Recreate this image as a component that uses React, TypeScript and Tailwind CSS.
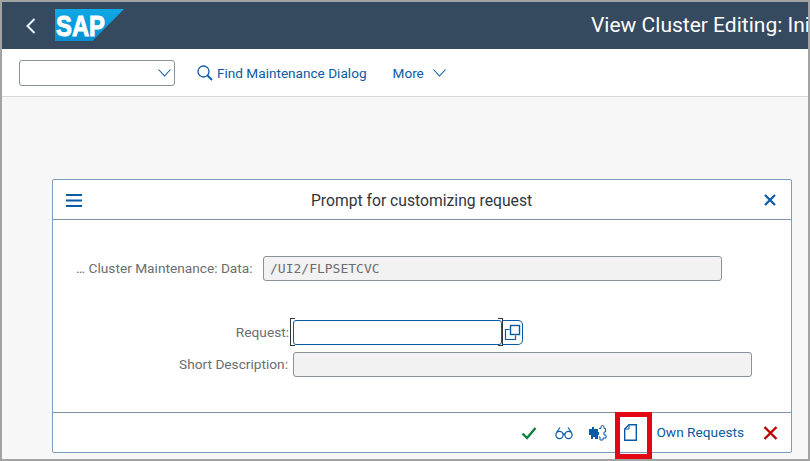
const font = "font-['Roboto',sans-serif]";

function SapLogo() {
  return (
    <svg width="70" height="33" viewBox="0 0 70 33" className="block">
      <defs>
        <linearGradient id="sapBlue" x1="0" y1="0" x2="0" y2="1">
          <stop offset="0" stopColor="#0fa8e6" />
          <stop offset="1" stopColor="#0a8fd0" />
        </linearGradient>
      </defs>
      <polygon points="0,0 69,0 37.5,32 0,32" fill="url(#sapBlue)" />
      <text
        x="1"
        y="27"
        fill="#fff"
        stroke="#fff"
        strokeWidth="1"
        fontFamily="Liberation Sans, sans-serif"
        fontWeight="700"
        fontSize="30"
        textLength="49"
        lengthAdjust="spacingAndGlyphs"
      >
        SAP
      </text>
    </svg>
  );
}

function Caret({ className = "" }: { className?: string }) {
  return (
    <svg width="13" height="8" viewBox="0 0 13 8" className={`shrink-0 ${className}`}>
      <path d="M.5.5l6 6.500 6-6.500" stroke="#0a5aa5" strokeWidth="1.100" fill="none" />
    </svg>
  );
}

function Field({ value, width }: { value?: string; width: string }) {
  return (
    <div
      className={`${width} h-[25px] rounded-[3px] border border-[#89919a] bg-[#f2f2f2] pl-[6px] font-['DejaVu_Sans_Mono',monospace] text-[13px] leading-[23px] text-[#6a6d70]`}
    >
      {value}
    </div>
  );
}

export default function App() {
  return (
    <div className={`${font} relative flex h-[461px] w-[810px] flex-col overflow-hidden border-2 border-[#a3a3a3] bg-[#f7f7f7]`}>
      {/* shell header */}
      <div className="flex h-[47px] shrink-0 items-center whitespace-nowrap bg-[#354a5f] text-white">
        <svg width="10" height="16" viewBox="0 0 10 16" className="ml-[24px] shrink-0">
          <path d="M8.500 1L1.500 8l7 7" stroke="#e6f3fb" strokeWidth="2" fill="none" />
        </svg>
        <div className="ml-[19px] -mt-[1px] shrink-0">
          <SapLogo />
        </div>
        <span className="ml-[466px] text-[21px]">View Cluster Editing: Ini</span>
      </div>

      {/* toolbar */}
      <div className="flex h-[48px] shrink-0 items-center border-b border-[#d9d9d9] bg-white pt-[1px] pl-[17px] text-[13.600px] text-[#0a5aa5]">
        <div className="flex h-[26px] w-[156px] items-center justify-end rounded-[3px] border border-[#89919a] pr-[3px]">
          <Caret />
        </div>
        <svg width="16" height="16" viewBox="0 0 16 16" className="ml-[22px] shrink-0">
          <circle cx="6.500" cy="6.500" r="5.500" stroke="#0a5aa5" strokeWidth="1.300" fill="none" />
          <path d="M10.500 10.500L15 15" stroke="#0a5aa5" strokeWidth="1.800" fill="none" />
        </svg>
        <span className="ml-[4px]">Find Maintenance Dialog</span>
        <span className="ml-[26px]">More</span>
        <Caret className="ml-[9px]" />
      </div>

      {/* dialog */}
      <div className="mt-[82px] ml-[50px] flex h-[274px] w-[740px] flex-col rounded-[2px] border border-[#7f9cbd] bg-white">
        <div className="flex h-[40px] shrink-0 items-center border-b border-[#7f93a8] px-[13px] pt-[1px]">
          <svg width="17" height="13" viewBox="0 0 17 13">
            <path d="M0 1h16M0 6.500h16M0 12h16" stroke="#0a5aa5" strokeWidth="2" fill="none" />
          </svg>
          <span className="flex-1 pt-[1px] pr-[4px] text-center text-[15.700px] text-[#32363a]">Prompt for customizing request</span>
          <svg width="12" height="12" viewBox="0 0 12 12" className="mr-[2px]">
            <path d="M1 1l10 10M11 1L1 11" stroke="#0a5aa5" strokeWidth="2.200" fill="none" />
          </svg>
        </div>

        <div className="flex-1 text-[13.700px] text-[#6a6d70]">
          <div className="mt-[36px] flex h-[25px] items-center">
            <span className="ml-[23px] w-[187px] whitespace-nowrap">… Cluster Maintenance: Data:</span>
            <Field value="/UI2/FLPSETCVC" width="w-[459px]" />
          </div>
          <div className="mt-[39px] flex h-[25px] items-center">
            <span className="w-[236px] text-right">Request:</span>
            <div className="relative ml-[4px] flex">
              <div className="h-[25px] w-[209px] rounded-[3px] border border-[#0a5aa5] bg-white" />
              <span className="absolute -top-[2px] -left-[3px] h-[28px] w-[5px] border-y border-l border-[#32363a]" />
              <span className="absolute -top-[2px] left-[205px] h-[28px] w-[5px] border-y border-r border-[#32363a]" />
              <div className="ml-[1px] flex h-[25px] w-[20px] items-center justify-center rounded-r-[5px] border-y border-r border-[#0a5aa5]">
                <svg width="17" height="17" viewBox="0 0 17 17">
                  <path d="M5.500 5.500H1.500v10h10v-4" stroke="#0a5aa5" strokeWidth="1.200" fill="none" />
                  <rect x="6.500" y="1.500" width="9" height="9" fill="#fff" stroke="#0a5aa5" strokeWidth="1.400" />
                </svg>
              </div>
            </div>
          </div>
          <div className="mt-[7px] flex h-[25px] items-center">
            <span className="w-[235px] text-right">Short Description:</span>
            <div className="ml-[5px]">
              <Field width="w-[459px]" />
            </div>
          </div>
        </div>

        {/* dialog footer */}
        <div className="flex h-[40px] shrink-0 items-center justify-end border-t border-[#7f93a8] pr-[13px] text-[13.700px] text-[#0a5aa5]">
          <svg width="16" height="14" viewBox="0 0 16 14">
            <path d="M1.500 7.500l4.500 4.500L14.500 2" stroke="#107e3e" strokeWidth="2.400" fill="none" />
          </svg>
          <svg width="18" height="14" viewBox="0 0 18 14" className="ml-[18px]">
            <g stroke="#0a5aa5" strokeWidth="1.200" fill="none">
              <circle cx="4.500" cy="9" r="3.600" />
              <circle cx="13.500" cy="9" r="3.600" />
              <path d="M8 8.500c.6-.6 1.400-.6 2 0M1.500 6.500L5 1.500M16.500 6.500L13 1.500" />
            </g>
          </svg>
          <svg width="18" height="18" viewBox="0 0 18 18" className="ml-[16px]">
            <path d="M0 5h3V3h2v2h4v3h1v3H9v4H6v-2H4v2H2v-4H0z" fill="#0a5aa5" />
            <path d="M10 4.500h2V3a1.500 1.500 0 013 0v1.500h1.500V8H15v3h2v3h-3v2h-3v-3h-1" fill="#fff" stroke="#0a5aa5" strokeWidth="1" />
          </svg>
          <svg width="13" height="17" viewBox="0 0 13 17" className="ml-[17px]">
            <path d="M5 .7h7.300v15.600H.7V5z" stroke="#0a5aa5" strokeWidth="1.400" fill="none" />
            <path d="M5 1v4H1" stroke="#0a5aa5" strokeWidth="1" fill="none" />
          </svg>
          <span className="ml-[19px]">Own Requests</span>
          <svg width="15" height="14" viewBox="0 0 15 14" className="ml-[19px]">
            <path d="M1.500 1l12 12M13.500 1l-12 12" stroke="#bb0000" strokeWidth="2.400" fill="none" />
          </svg>
        </div>
      </div>

      {/* red highlight over the new-request button */}
      <div className="absolute top-[410px] left-[613px] h-[47px] w-[37px] border-[5px] border-[#e30613]" />
    </div>
  );
}
